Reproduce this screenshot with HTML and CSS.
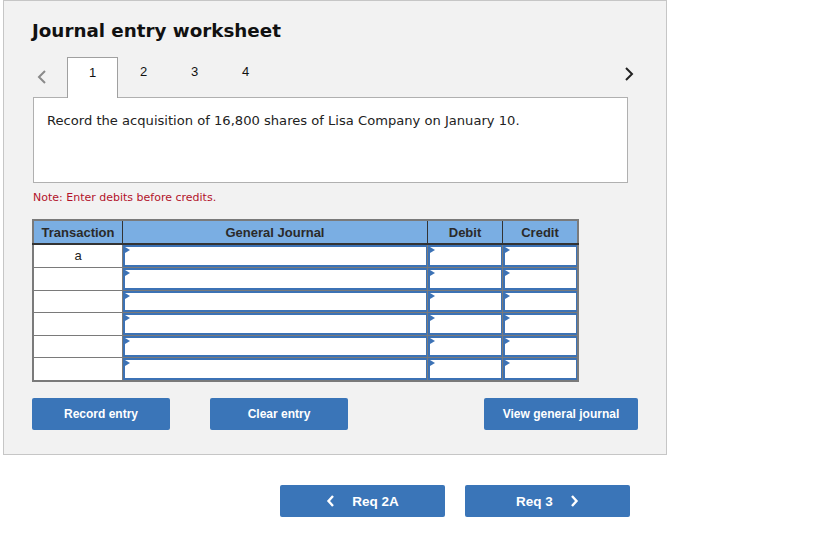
FILE: index.html
```html
<!DOCTYPE html>
<html lang="en">
<head>
  <meta charset="UTF-8" />
  <title>Journal entry worksheet</title>
  <link rel="stylesheet" href="styles.css">
</head>
<body>
  <div class="panel">
    <h1 class="title">Journal entry worksheet</h1>

    <!-- Tabs -->
    <div class="tabs">
      <span class="arrow prev">
        <svg width="12" height="16" viewBox="0 0 12 16"><polyline points="9,2 3,8 9,14" fill="none" stroke="#8a8a8a" stroke-width="2"/></svg>
      </span>
      <span class="tab active">1</span>
      <span class="tab">2</span>
      <span class="tab">3</span>
      <span class="tab">4</span>
      <span class="arrow next">
        <svg width="12" height="16" viewBox="0 0 12 16"><polyline points="3,2 9,8 3,14" fill="none" stroke="#222" stroke-width="2"/></svg>
      </span>
    </div>

    <div class="question">Record the acquisition of 16,800 shares of Lisa Company on January 10.</div>

    <div class="note">Note: Enter debits before credits.</div>

    <table class="journal">
      <thead>
        <tr>
          <th class="col-trans">Transaction</th>
          <th class="col-gj">General Journal</th>
          <th class="col-amt">Debit</th>
          <th class="col-amt">Credit</th>
        </tr>
      </thead>
      <tbody>
        <tr><td class="trans">a</td><td class="inp"><div></div></td><td class="inp"><div></div></td><td class="inp"><div></div></td></tr>
        <tr><td class="trans"></td><td class="inp"><div></div></td><td class="inp"><div></div></td><td class="inp"><div></div></td></tr>
        <tr><td class="trans"></td><td class="inp"><div></div></td><td class="inp"><div></div></td><td class="inp"><div></div></td></tr>
        <tr><td class="trans"></td><td class="inp"><div></div></td><td class="inp"><div></div></td><td class="inp"><div></div></td></tr>
        <tr><td class="trans"></td><td class="inp"><div></div></td><td class="inp"><div></div></td><td class="inp"><div></div></td></tr>
        <tr><td class="trans"></td><td class="inp"><div></div></td><td class="inp"><div></div></td><td class="inp"><div></div></td></tr>
      </tbody>
    </table>

    <div class="actions">
      <button class="btn btn-record">Record entry</button>
      <button class="btn btn-clear">Clear entry</button>
      <button class="btn btn-view">View general journal</button>
    </div>
  </div>

  <!-- Requirement navigation -->
  <div class="req-nav">
    <button class="btn req">
      <svg width="10" height="14" viewBox="0 0 10 14"><polyline points="7,2 2.5,7 7,12" fill="none" stroke="#fff" stroke-width="2.4"/></svg>
      <span>Req 2A</span>
    </button>
    <button class="btn req">
      <span>Req 3</span>
      <svg width="10" height="14" viewBox="0 0 10 14"><polyline points="3,2 7.5,7 3,12" fill="none" stroke="#fff" stroke-width="2.4"/></svg>
    </button>
  </div>
</body>
</html>
```

FILE: styles.css
```css
body {
  margin: 0;
  background: #fff;
  font-family: "DejaVu Sans", Verdana, sans-serif;
  color: #222;
}

.panel {
  box-sizing: border-box;
  width: 664px;
  height: 455px;
  margin-left: 3px;
  padding: 18px 28px 0 28px;
  background: #f2f2f2;
  border: 1px solid #c6c6c6;
}

.title {
  margin: 0;
  font-size: 18.3px;
  line-height: 24px;
  font-weight: bold;
  color: #111;
}

.tabs {
  display: flex;
  align-items: flex-end;
  height: 40px;
  margin-top: 14px;
  margin-left: 1px;
  position: relative;
  z-index: 2;
}

.arrow {
  display: flex;
  align-items: center;
  height: 40px;
}

.arrow.prev {
  width: 34px;
  padding-left: 3px;
  box-sizing: border-box;
}

.arrow.next {
  margin-left: auto;
  margin-right: 3px;
  padding-bottom: 3px;
}

.tab {
  box-sizing: border-box;
  width: 51px;
  height: 40px;
  line-height: 30px;
  text-align: center;
  font-family: "Liberation Sans", Arial, sans-serif;
  font-size: 13px;
  color: #111;
}

.tab.active {
  width: 51px;
  height: 41px;
  margin-bottom: -1px;
  background: #fff;
  border: 1px solid #a0a0a0;
  border-bottom: none;
  line-height: 30px;
}

.question {
  box-sizing: border-box;
  height: 86px;
  margin-left: 1px;
  width: 595px;
  padding: 14px 13px;
  background: #fff;
  border: 1px solid #b0b0b0;
  font-size: 13.1px;
  line-height: 18px;
  color: #222;
}

.note {
  margin-top: 8px;
  margin-left: 1px;
  font-size: 11px;
  line-height: 14px;
  color: #b3122b;
}

.journal {
  margin-top: 14px;
  border-collapse: collapse;
  width: 546px;
  font-family: "Liberation Sans", Arial, sans-serif;
  font-size: 13px;
  border: 2px solid #7a7a7a;
  table-layout: fixed;
}

.journal th {
  height: 22px;
  padding: 0;
  background: #7aaee3;
  color: #2a2a2a;
  font-weight: bold;
  border-left: 1px solid #333;
  border-bottom: 2px solid #333;
}

.journal th:first-child {
  border-left: none;
}

.col-trans { width: 88px; }
.col-gj { width: 304px; }
.col-amt { width: 74px; }

.journal td {
  height: 22.5px;
  padding: 0;
  background: #fff;
  border: 1px solid #7a7a7a;
  box-sizing: border-box;
}

.journal td.trans {
  text-align: center;
  vertical-align: top;
  line-height: 22px;
  color: #222;
}

.journal td.inp {
  position: relative;
}

.journal td.inp div {
  box-sizing: border-box;
  height: 21.5px;
  border: 2px solid #3c72b5;
  border-right-width: 1px;
  background: #fff;
}

/* small blue marker in each input cell */
.journal td.inp div::before {
  content: "";
  position: absolute;
  top: 2px;
  left: 2px;
  border-top: 3px solid transparent;
  border-bottom: 3px solid transparent;
  border-left: 5px solid #3c72b5;
}

.actions {
  display: flex;
  margin-top: 16px;
}

.btn {
  height: 32px;
  border: none;
  border-radius: 2px;
  background: #3a75b8;
  color: #fff;
  font-family: "Liberation Sans", Arial, sans-serif;
  font-weight: bold;
  font-size: 12px;
  cursor: pointer;
  padding: 0;
}

.btn-record { width: 138px; }
.btn-clear { width: 138px; margin-left: 40px; }
.btn-view { width: 154px; margin-left: auto; margin-right: 0; }

.req-nav {
  display: flex;
  gap: 20px;
  margin-top: 30px;
  margin-left: 280px;
}

.btn.req {
  width: 165px;
  height: 32px;
  display: flex;
  align-items: center;
  justify-content: center;
  gap: 16px;
  font-size: 13.5px;
}
```
